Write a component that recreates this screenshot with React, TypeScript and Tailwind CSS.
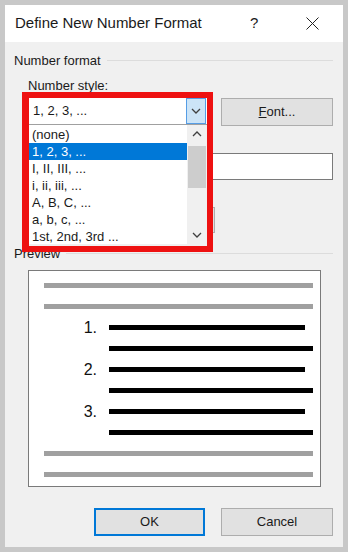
import React from 'react';

const STYLES = ['(none)', '1, 2, 3, ...', 'I, II, III, ...', 'i, ii, iii, ...', 'A, B, C, ...', 'a, b, c, ...', '1st, 2nd, 3rd ...'];

type Row = { kind: 'gray' | 'num' | 'cont'; label?: string };

const PREVIEW: Row[] = [
  { kind: 'gray' },
  { kind: 'gray' },
  { kind: 'num', label: '1.' },
  { kind: 'cont' },
  { kind: 'num', label: '2.' },
  { kind: 'cont' },
  { kind: 'num', label: '3.' },
  { kind: 'cont' },
  { kind: 'gray' },
  { kind: 'gray' },
];

const Chevron: React.FC<{ up?: boolean }> = ({ up }) => (
  <svg width="10" height="6" viewBox="0 0 10 6" fill="none">
    <polyline
      points={up ? '1,5 5,1 9,5' : '1,1 5,5 9,1'}
      stroke="#404040"
      strokeWidth="1.3"
    />
  </svg>
);

const GroupHeader: React.FC<{ title: string }> = ({ title }) => (
  <div className="flex items-center h-4">
    <span className="text-[13px] text-[#1a1a1a] leading-none">{title}</span>
    <div className="flex-1 h-px bg-[#dcdcdc] ml-[6px]" />
  </div>
);

export default function App() {
  return (
    <div className="w-[348px] h-[552px] bg-[#c8c8c8] p-[5px] font-['Liberation_Sans',Arial,sans-serif] text-[#1a1a1a]">
      <div className="h-full flex flex-col bg-[#f0f0f0]">
        {/* title bar */}
        <div className="h-[37px] bg-white flex items-center pl-[10px] shrink-0">
          <span className="text-[15px] flex-1">Define New Number Format</span>
          <span className="text-[15px] w-[8px] mr-[48px]">?</span>
          <svg width="13" height="13" viewBox="0 0 13 13" className="mr-[24px]">
            <path d="M0.5 0.5 L12.5 12.5 M12.5 0.5 L0.5 12.5" stroke="#222" strokeWidth="1" />
          </svg>
        </div>

        <div className="flex-1 pl-[9px] pr-[10px] pt-[10px]">
          <GroupHeader title="Number format" />

          <div className="ml-[14px] mt-[10px] h-4 flex items-center text-[13px]">
            <span>Number style:</span>
          </div>

          <div className="ml-[14px] mt-[4px] flex items-start gap-[14px]">
            {/* number style combobox with open list */}
            <div className="relative w-[179px] h-[27px] z-10">
              <div className="h-full bg-white border-b border-[#a0a0a0] flex items-center">
                <span className="flex-1 pl-[5px] text-[13px]">1, 2, 3, ...</span>
                <div className="w-[20px] h-[26px] mr-[1px] bg-[#cce4f7] border border-[#569de5] flex items-center justify-center">
                  <Chevron />
                </div>
              </div>
              <div className="absolute left-0 top-[27px] w-[179px] h-[119px] bg-white flex">
                <div className="flex-1 pt-[1px]">
                  {STYLES.map((s, i) => (
                    <div
                      key={s}
                      className={`h-[17px] flex items-center pl-[4px] text-[13px] ${
                        i === 1 ? 'bg-[#0078d7] text-white' : ''
                      }`}
                    >
                      {s}
                    </div>
                  ))}
                </div>
                <div className="w-[20px] bg-[#f0f0f0] flex flex-col items-center">
                  <div className="h-[18px] flex items-center justify-center">
                    <Chevron up />
                  </div>
                  <div className="w-[18px] h-[42px] mt-[3px] bg-[#cdcdcd]" />
                  <div className="flex-1" />
                  <div className="h-[18px] flex items-center justify-center">
                    <Chevron />
                  </div>
                </div>
              </div>
              {/* red highlight */}
              <div className="absolute -left-[6px] -top-[6px] w-[191px] h-[160px] border-[6px] border-l-[7px] border-[#ee1111] pointer-events-none" />
            </div>

            <button className="w-[112px] h-[28px] bg-[#e1e1e1] border border-[#adadad] text-[13px]">
              <span className="underline">F</span>ont...
            </button>
          </div>

          {/* number format textbox */}
          <div className="ml-[14px] mt-[27px] h-[27px] bg-white border border-[#7a7a7a]" />

          {/* alignment combobox (mostly hidden) */}
          <div className="ml-[14px] mt-[27px] w-[187px] h-[26px] bg-[#e1e1e1] border border-[#adadad]" />

          <div className="mt-[12px]">
            <GroupHeader title="Preview" />
          </div>

          {/* preview box */}
          <div className="ml-[14px] mt-[9px] w-[293px] h-[217px] bg-white border border-[#7a7a7a] pt-[4px] pl-[15px] pr-[7px]">
            {PREVIEW.map((r, i) => (
              <div key={i} className="h-[21px] flex items-center">
                {r.kind === 'gray' && <div className="w-full h-[5px] bg-[#a0a0a0]" />}
                {r.kind !== 'gray' && (
                  <>
                    <span className="w-[53px] text-right text-[16px] text-[#111] leading-none">{r.label ?? ''}</span>
                    <div className="w-[12px]" />
                    <div className={`h-[5px] bg-black ${r.kind === 'num' ? 'w-[196px]' : 'flex-1'}`} />
                  </>
                )}
              </div>
            ))}
          </div>

          {/* buttons */}
          <div className="mt-[21px] flex justify-end gap-[16px]">
            <button className="w-[111px] h-[28px] bg-[#e1e1e1] border-2 border-[#0078d7] text-[13px]">OK</button>
            <button className="w-[112px] h-[28px] bg-[#e1e1e1] border border-[#adadad] text-[13px]">Cancel</button>
          </div>
        </div>
      </div>
    </div>
  );
}
